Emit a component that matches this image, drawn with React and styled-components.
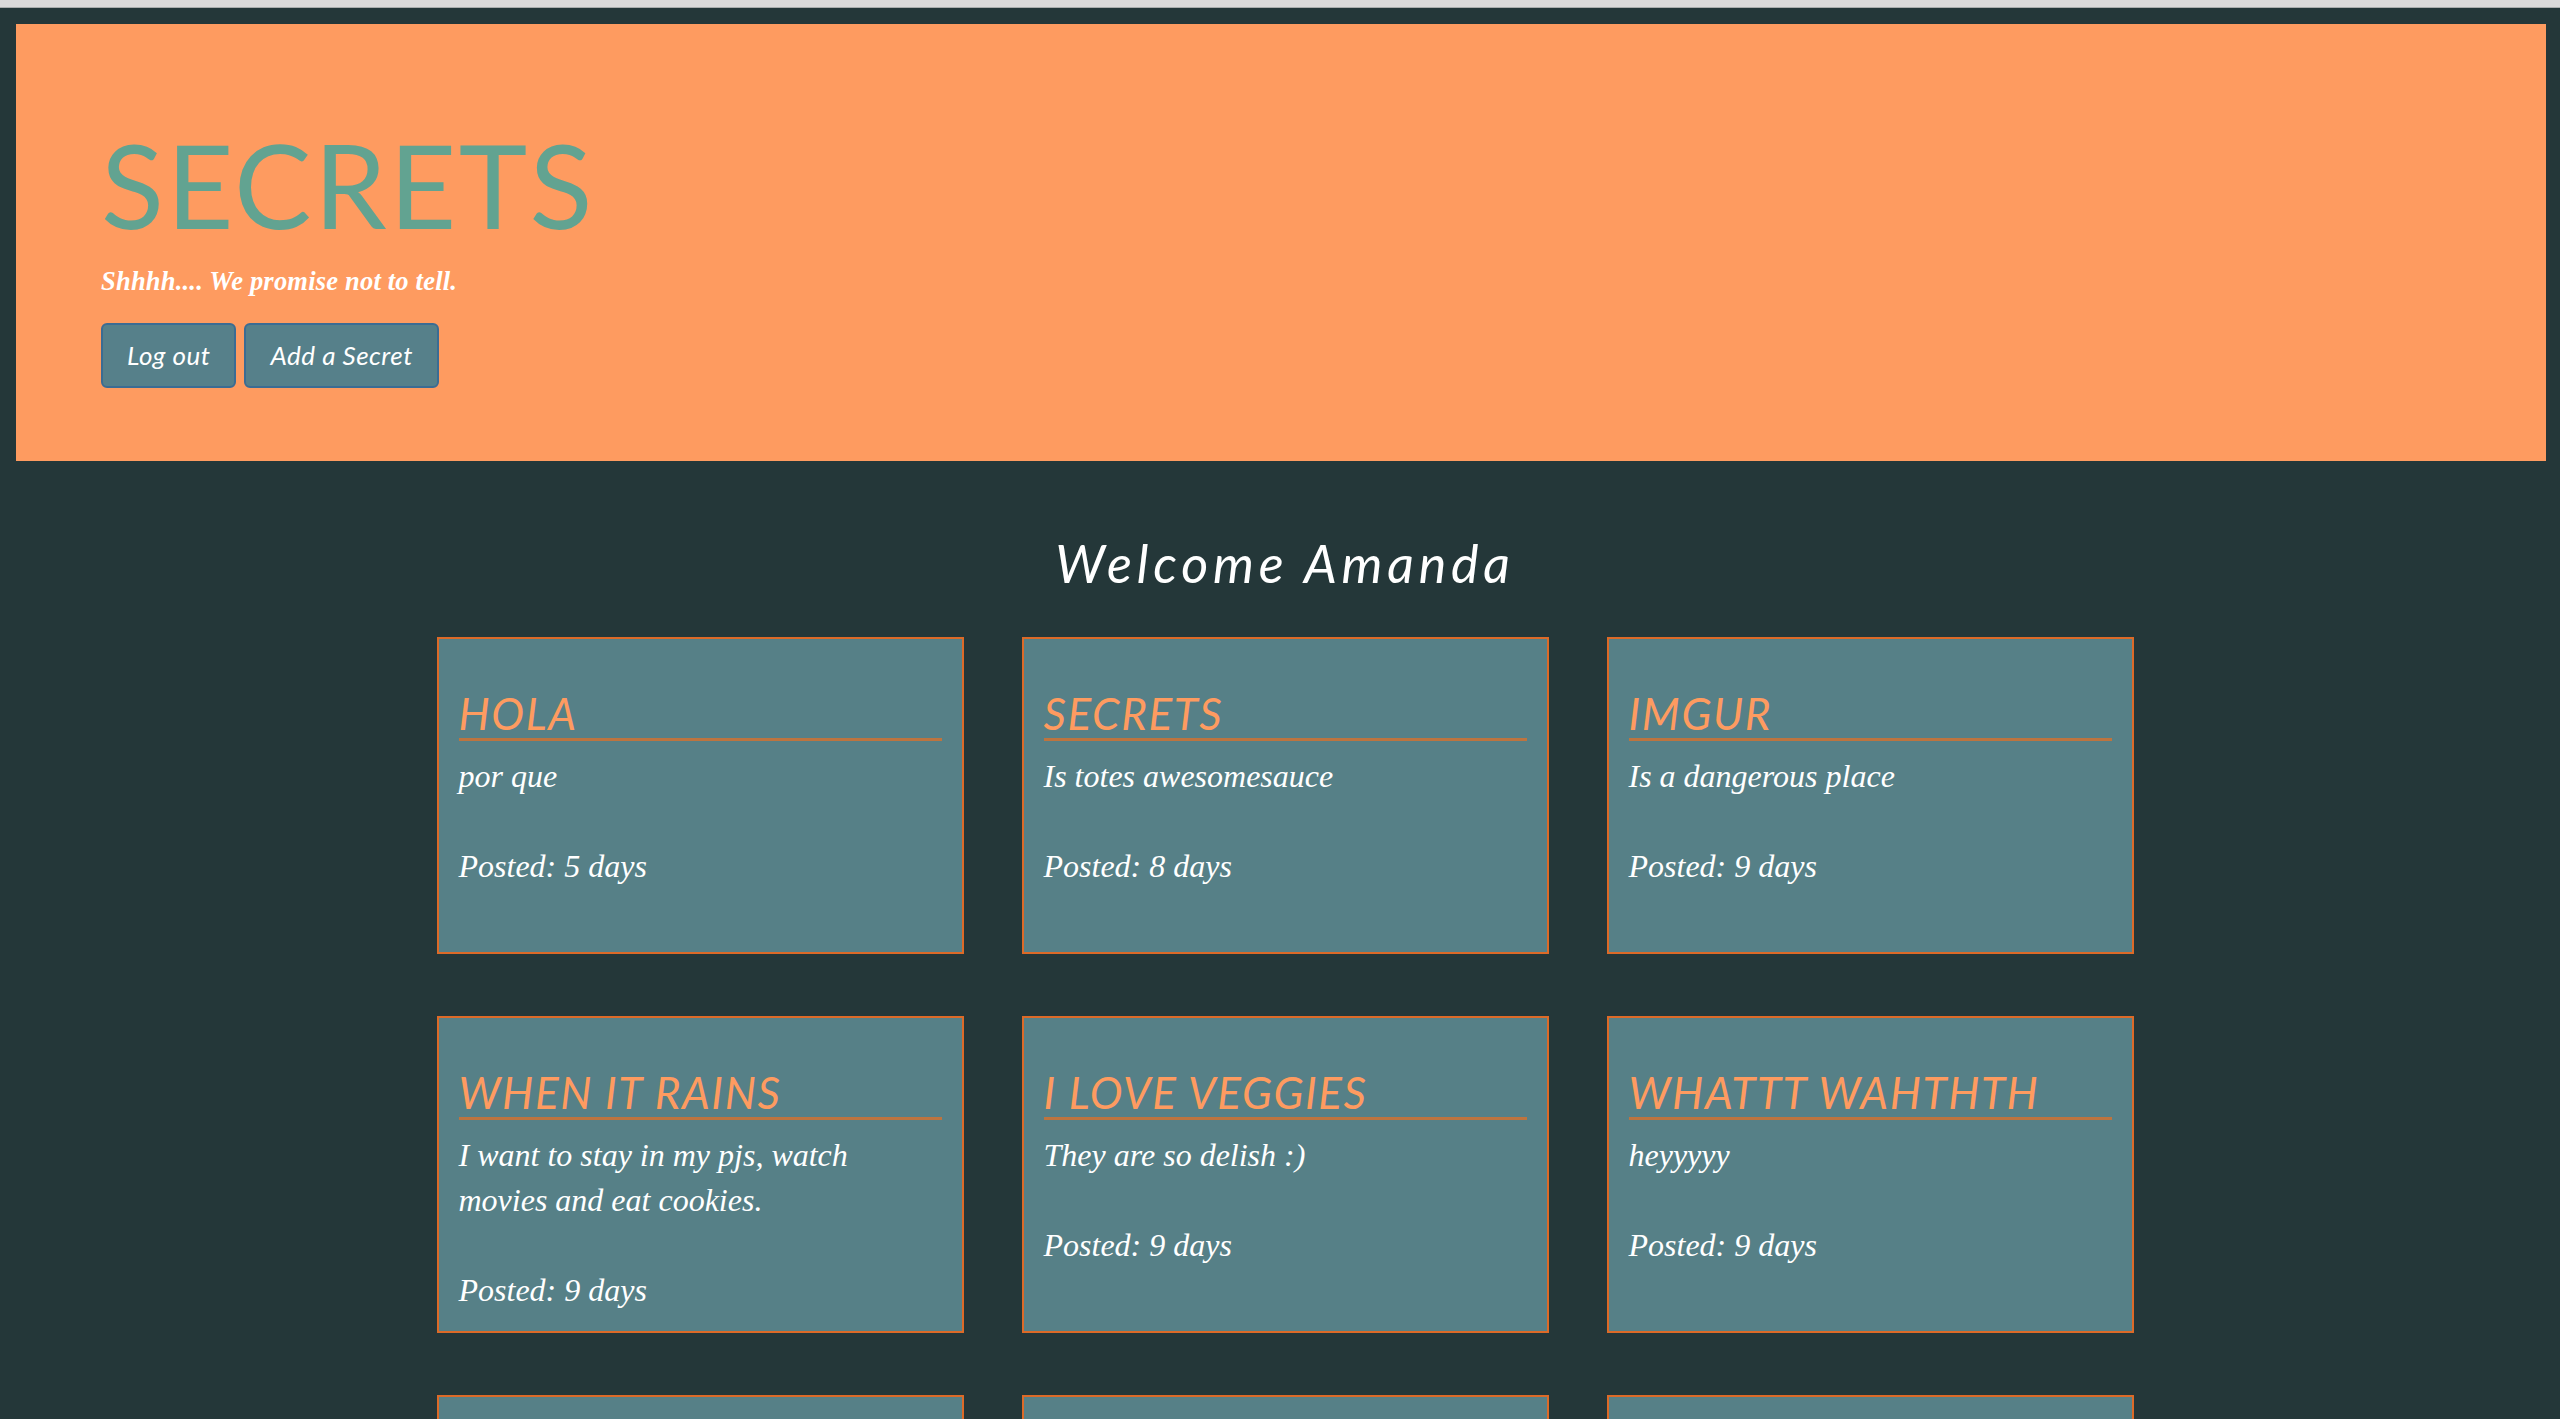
import React from "react";
import styled, { createGlobalStyle } from "styled-components";

const GlobalStyle = createGlobalStyle`
  html, body {
    margin: 0;
    padding: 0;
    background: #243739;
    overflow: hidden;
  }
  * { box-sizing: border-box; }
`;

const Page = styled.div`
  min-height: 1419px;
  background: #243739;
`;

const ChromeStrip = styled.div`
  height: 8px;
  background: #dadada;
  border-bottom: 1px solid #a9adad;
`;

const Header = styled.header`
  margin: 16px 14px 0 16px;
  background: #fe9b60;
  padding: 103px 0 73px 85px;
  display: flex;
  flex-direction: column;
  align-items: flex-start;
`;

const Title = styled.h1`
  margin: 0;
  font-family: Lato, "Open Sans", sans-serif;
  font-weight: 400;
  font-size: 116px;
  line-height: 1;
  letter-spacing: 2.5px;
  color: #62a391;
`;

const Tagline = styled.p`
  margin: 25px 0 0 0;
  font-family: "Liberation Serif", serif;
  font-style: italic;
  font-weight: 700;
  font-size: 26.5px;
  line-height: 1;
  letter-spacing: 0.2px;
  color: #ffffff;
`;

const ButtonRow = styled.div`
  display: flex;
  gap: 8px;
  margin-top: 28px;
`;

const Button = styled.button`
  height: 65px;
  padding: 0 24px;
  background: #56808a;
  border: 2px solid #3b6c93;
  border-radius: 6px;
  color: #ffffff;
  font-family: Lato, sans-serif;
  font-style: italic;
  font-size: 26px;
  letter-spacing: 0.5px;
  cursor: pointer;
`;

const Main = styled.main`
  padding-left: 10px;
  display: flex;
  flex-direction: column;
  align-items: center;
`;

const Welcome = styled.h2`
  margin: 76px 0 0 0;
  font-family: Lato, sans-serif;
  font-style: italic;
  font-weight: 400;
  font-size: 52px;
  line-height: 1;
  letter-spacing: 4.8px;
  color: #ffffff;
`;

const Grid = styled.div`
  margin-top: 48px;
  display: grid;
  grid-template-columns: repeat(3, 527px);
  column-gap: 58px;
  row-gap: 62px;
`;

const Card = styled.article`
  height: 317px;
  background: #568087;
  border: 2px solid #dc6a28;
  padding: 52px 20px 0 20px;
`;

const CardTitle = styled.h3`
  margin: 0;
  padding-bottom: 3px;
  border-bottom: 3px solid #bd743f;
  font-family: Lato, sans-serif;
  font-style: italic;
  font-weight: 400;
  font-size: 44px;
  line-height: 1;
  color: #fe9b60;
  text-transform: uppercase;
  letter-spacing: 1.6px;
`;

const CardText = styled.p`
  margin: ${(p) => (p.$posted ? "45px" : "13px")} 0 0 0;
  font-family: "Liberation Serif", serif;
  font-style: italic;
  font-size: 32px;
  line-height: 45px;
  color: #ffffff;
`;

const secrets = [
  { title: "Hola", body: "por que", days: 5 },
  { title: "Secrets", body: "Is totes awesomesauce", days: 8 },
  { title: "Imgur", body: "Is a dangerous place", days: 9 },
  { title: "When it rains", body: "I want to stay in my pjs, watch movies and eat cookies.", days: 9 },
  { title: "I love veggies", body: "They are so delish :)", days: 9 },
  { title: "Whattt wahthth", body: "heyyyyy", days: 9 },
  { title: "Coffee", body: "I drink way too much of it", days: 10 },
  { title: "Cats", body: "Are better than dogs", days: 11 },
  { title: "Shhh", body: "Don't tell anyone", days: 12 },
];

export default function App() {
  return (
    <Page>
      <GlobalStyle />
      <ChromeStrip />
      <Header>
        <Title>SECRETS</Title>
        <Tagline>Shhhh.... We promise not to tell.</Tagline>
        <ButtonRow>
          <Button>Log out</Button>
          <Button>Add a Secret</Button>
        </ButtonRow>
      </Header>
      <Main>
        <Welcome>Welcome Amanda</Welcome>
        <Grid>
          {secrets.map((s) => (
            <Card key={s.title}>
              <CardTitle>{s.title}</CardTitle>
              <CardText>{s.body}</CardText>
              <CardText $posted>Posted: {s.days} days</CardText>
            </Card>
          ))}
        </Grid>
      </Main>
    </Page>
  );
}
